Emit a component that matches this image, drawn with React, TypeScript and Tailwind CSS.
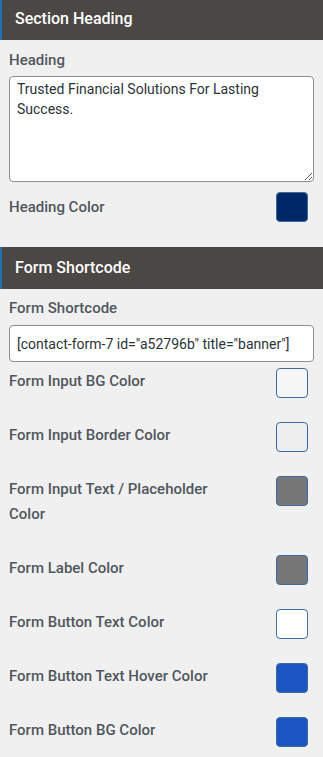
import React from 'react';

const swatches = [
  { label: 'Form Input BG Color', color: '#f7f7f7' },
  { label: 'Form Input Border Color', color: '#eeeeee' },
  { label: 'Form Input Text / Placeholder Color', color: '#777777' },
  { label: 'Form Label Color', color: '#777777' },
  { label: 'Form Button Text Color', color: '#ffffff' },
  { label: 'Form Button Text Hover Color', color: '#1b56c2' },
  { label: 'Form Button BG Color', color: '#1b56c2' },
];

const SectionHeader = ({ title }: { title: string }) => (
  <div className="h-[42px] bg-[#4b4745] border-l-2 border-[#2271b1] flex items-center pl-[13px]">
    <h3 className="text-white text-[16px] font-medium">{title}</h3>
  </div>
);

const Swatch = ({ color }: { color: string }) => (
  <span
    className="block w-[32px] h-[30px] shrink-0 rounded-[4px] border border-[#3a6d99]"
    style={{ backgroundColor: color }}
  />
);

const App = () => {
  return (
    <div
      className="w-[323px] h-[757px] bg-[#f0f0f0] overflow-hidden text-[#50575e]"
      style={{ fontFamily: 'Roboto, "Noto Sans", sans-serif' }}
    >
      <div className="-mt-[2px]">
        <SectionHeader title="Section Heading" />
      </div>

      <div className="px-[9px] pt-[8px]">
        <label className="block text-[15px] font-medium leading-[24px]">Heading</label>
        <textarea
          className="mt-[4px] block w-full h-[106px] resize-y rounded-[4px] border border-[#8c8f94] bg-white px-[7px] py-[2px] text-[14px] leading-[20px] text-[#2c3338] outline-none"
          defaultValue="Trusted Financial Solutions For Lasting Success."
        />
        <div className="flex items-center justify-between mt-[10px] pr-[6px]">
          <span className="text-[15px] font-medium leading-[24px]">Heading Color</span>
          <Swatch color="#002868" />
        </div>
      </div>

      <div className="mt-[25px]">
        <SectionHeader title="Form Shortcode" />
      </div>

      <div className="px-[9px] pt-[7px]">
        <label className="block text-[15px] font-medium leading-[24px]">Form Shortcode</label>
        <input
          className="mt-[5px] block w-full h-[37px] rounded-[4px] border border-[#8c8f94] bg-white px-[7px] text-[14px] text-[#2c3338] outline-none"
          defaultValue={'[contact-form-7 id="a52796b" title="banner"]'}
        />
        <div className="mt-[6px] flex flex-col gap-[23px]">
          {swatches.map((s) => (
            <div key={s.label} className="flex items-start justify-between pr-[6px]">
              <span className="w-[214px] pt-[1px] pb-[5px] text-[15px] font-medium leading-[25px]">{s.label}</span>
              <Swatch color={s.color} />
            </div>
          ))}
        </div>
      </div>
    </div>
  );
};

export default App;
